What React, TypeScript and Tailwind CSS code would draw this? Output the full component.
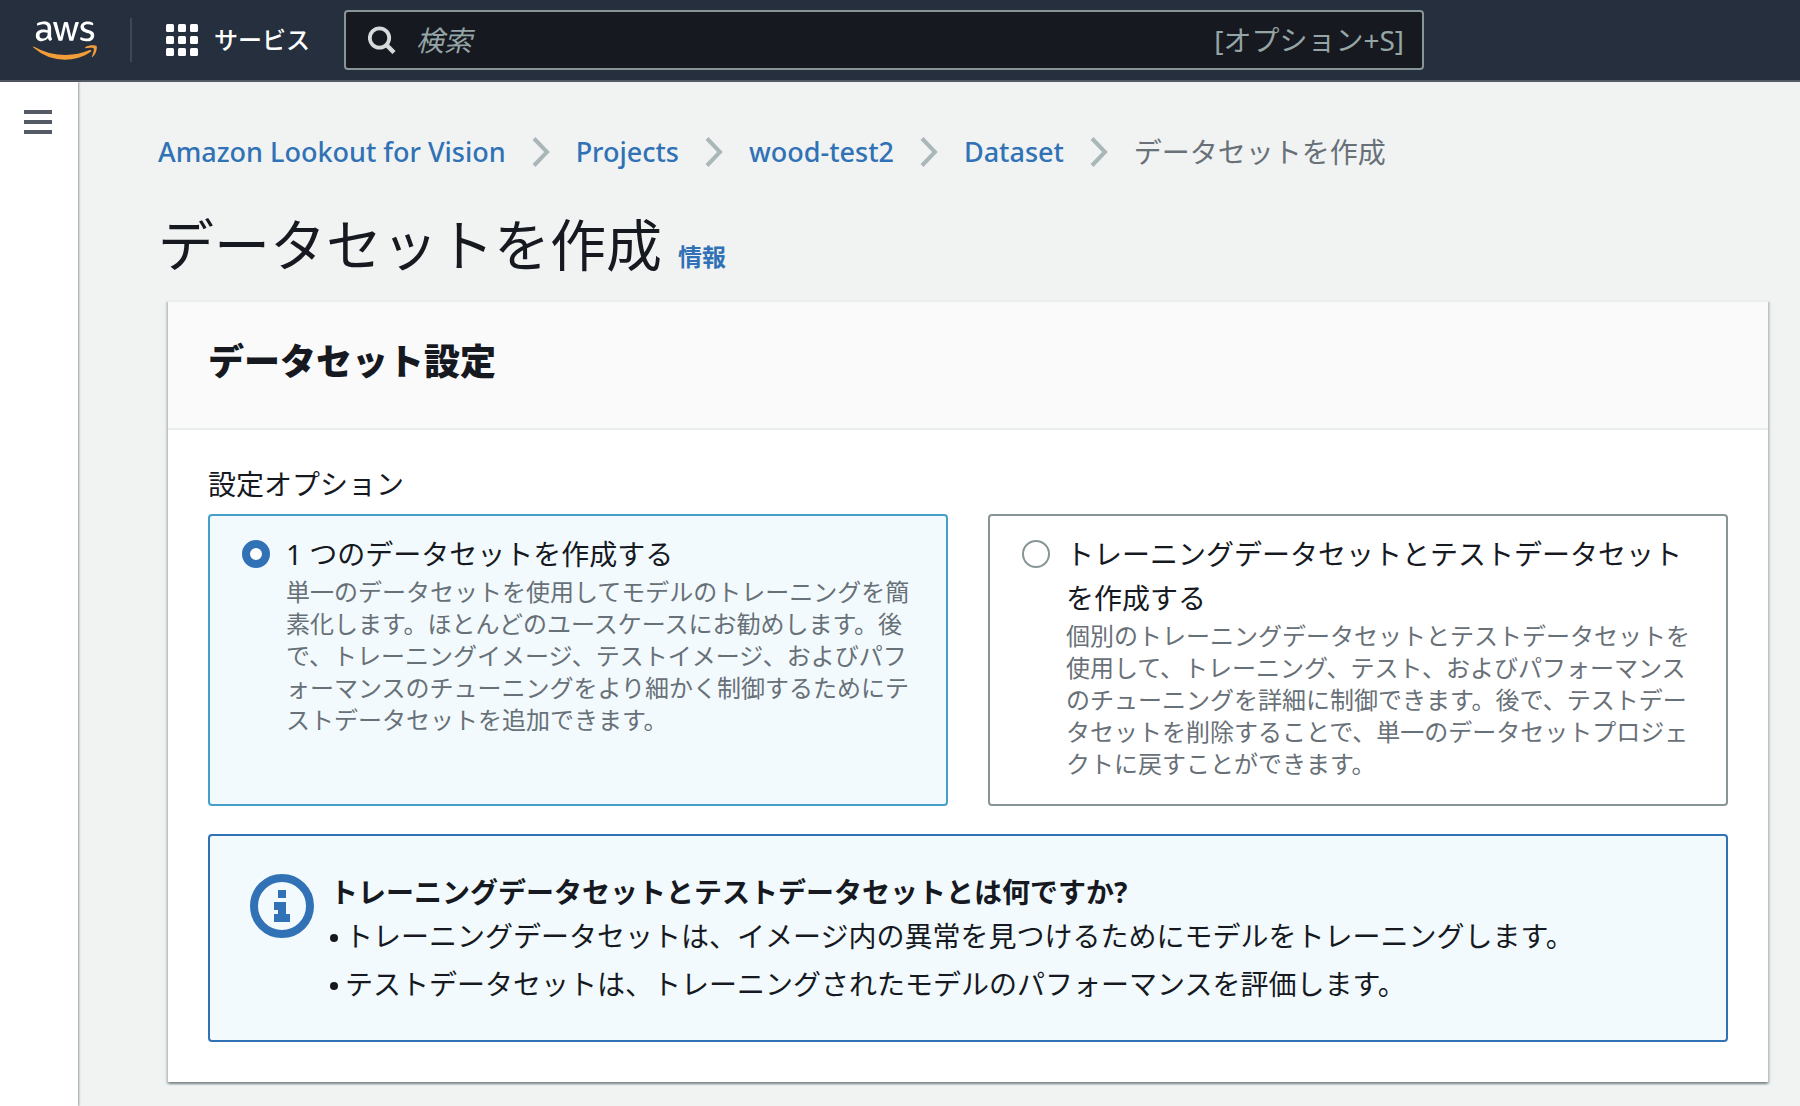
import { useState, type ReactNode } from "react";
import { FaAws } from "react-icons/fa";

const crumbs = ["Amazon Lookout for Vision", "Projects", "wood-test2", "Dataset"];

const options = [
  {
    id: "single",
    title: "1 つのデータセットを作成する",
    text: "単一のデータセットを使用してモデルのトレーニングを簡素化します。ほとんどのユースケースにお勧めします。後で、トレーニングイメージ、テストイメージ、およびパフォーマンスのチューニングをより細かく制御するためにテストデータセットを追加できます。",
  },
  {
    id: "split",
    title: "トレーニングデータセットとテストデータセットを作成する",
    text: "個別のトレーニングデータセットとテストデータセットを使用して、トレーニング、テスト、およびパフォーマンスのチューニングを詳細に制御できます。後で、テストデータセットを削除することで、単一のデータセットプロジェクトに戻すことができます。",
  },
];

const notes = [
  "トレーニングデータセットは、イメージ内の異常を見つけるためにモデルをトレーニングします。",
  "テストデータセットは、トレーニングされたモデルのパフォーマンスを評価します。",
];

function AwsLogo() {
  return (
    <a href="#" aria-label="AWS" className="block text-white">
      <svg width="0" height="0" className="absolute" aria-hidden="true">
        <defs>
          <linearGradient id="aws-fill" gradientUnits="userSpaceOnUse" x1="0" y1="0" x2="0" y2="512">
            <stop offset="0.595" stopColor="#ffffff" />
            <stop offset="0.595" stopColor="#f19e38" />
          </linearGradient>
        </defs>
      </svg>
      <FaAws className="h-[51px] w-16 fill-[url(#aws-fill)]" />
    </a>
  );
}

function GridIcon() {
  return (
    <svg width="32" height="32" viewBox="0 0 32 32" fill="currentColor" aria-hidden="true">
      {[0, 12, 24].map((y) => [0, 12, 24].map((x) => <rect key={`${x}-${y}`} x={x} y={y} width="8" height="8" rx="1.5" />))}
    </svg>
  );
}

function SearchIcon() {
  return (
    <svg width="28" height="28" viewBox="0 0 28 28" fill="none" stroke="#d5dbdb" aria-hidden="true" className="shrink-0">
      <circle cx="11.5" cy="12" r="9.7" strokeWidth="3.8" />
      <path d="M18.5 19l7.5 7.5" strokeWidth="4.4" />
    </svg>
  );
}

function Chevron() {
  return (
    <svg width="18" height="30" viewBox="0 0 18 30" fill="none" stroke="#aab7b8" strokeWidth="4" aria-hidden="true">
      <path d="M2 1.5L15 15L2 28.5" />
    </svg>
  );
}

function InfoIcon() {
  return (
    <svg width="64" height="64" viewBox="0 0 64 64" aria-hidden="true" className="shrink-0">
      <circle cx="32" cy="32" r="28" fill="none" stroke="#3072b5" strokeWidth="8" />
      <path fill="#3072b5" d="M28 16h8v8h-8zM24 28h12v12h4v8H24v-8h4v-4h-4z" />
    </svg>
  );
}

function Header() {
  return (
    <header className="flex items-center border-b-2 border-[#545b64] bg-[#262f3e] pr-8">
      <div className="flex h-20 items-center pl-[33px]">
        <AwsLogo />
        <div className="ml-[33px] h-11 w-0.5 bg-[#414750]" />
        <button type="button" className="ml-[34px] flex items-center gap-4 text-2xl text-white">
          <GridIcon />
          <span className="font-medium">サービス</span>
        </button>
      </div>
      <label className="ml-[34px] flex h-[60px] w-full max-w-[1080px] items-center rounded-sm border-2 border-[#879596] bg-[#16191f] pr-[18px] pl-[22px] text-[28px] text-[#95a5a6]">
        <SearchIcon />
        <input
          type="search"
          placeholder="検索"
          aria-label="検索"
          className="ml-5 min-w-0 flex-1 bg-transparent outline-none placeholder:text-[#95a5a6] placeholder:italic"
        />
        <span>[オプション+S]</span>
      </label>
    </header>
  );
}

function Card({ title, children }: { title: string; children: ReactNode }) {
  return (
    <section className="mt-[22px] ml-2.5 border-t-2 border-[#eaeded] bg-white shadow-[0_2px_2px_0_rgba(0,28,36,0.3),2px_2px_2px_0_rgba(0,28,36,0.15),-2px_2px_2px_0_rgba(0,28,36,0.15)]">
      <div className="border-b-2 border-[#eaeded] bg-[#fafafa] px-10 pt-8 pb-[38px]">
        <h2 className="text-4xl leading-14 font-black">{title}</h2>
      </div>
      <div className="px-10 pt-8 pb-10">{children}</div>
    </section>
  );
}

export default function App() {
  const [selected, setSelected] = useState("single");
  return (
    <div
      lang="ja"
      className="flex min-h-screen flex-col bg-[#f1f3f3] font-['Noto_Sans','Noto_Sans_CJK_JP',sans-serif] text-[#16191f]"
    >
      <Header />
      <div className="flex flex-1">
        <aside className="w-[78px] shrink-0 bg-white px-6 pt-7 shadow-[1px_0_2px_rgba(0,28,36,0.4)]">
          <button type="button" aria-label="メニュー" className="flex w-7 flex-col gap-1.5">
            <span className="h-1 w-full bg-[#545b64]" />
            <span className="h-1 w-full bg-[#545b64]" />
            <span className="h-1 w-full bg-[#545b64]" />
          </button>
        </aside>
        <main className="min-w-0 flex-1 pt-12 pr-8 pb-6 pl-20">
          <nav aria-label="パンくずリスト">
            <ol className="flex flex-wrap items-center text-[28px] leading-11">
              {crumbs.map((c) => (
                <li key={c} className="flex items-center">
                  <a href="#" className="text-[27px] font-medium text-[#3072b5]">
                    {c}
                  </a>
                  <span className="mx-[26px]">
                    <Chevron />
                  </span>
                </li>
              ))}
              <li className="text-[#687078]" aria-current="page">
                データセットを作成
              </li>
            </ol>
          </nav>
          <div className="mt-9 flex items-baseline gap-4">
            <h1 className="text-[56px] leading-[68px]">データセットを作成</h1>
            <a href="#" className="text-2xl font-bold text-[#3072b5]">
              情報
            </a>
          </div>
          <Card title="データセット設定">
            <fieldset>
              <legend className="text-[28px] leading-11">設定オプション</legend>
              <div className="mt-2 grid grid-cols-2 gap-10">
                {options.map((o) => (
                  <label
                    key={o.id}
                    htmlFor={o.id}
                    className="flex gap-4 rounded-sm border-2 border-[#879596] pt-4 pr-9 pb-6 pl-8 has-checked:border-[#469fc9] has-checked:bg-[#f2fafd]"
                  >
                    <input
                      id={o.id}
                      type="radio"
                      name="dataset-option"
                      checked={selected === o.id}
                      onChange={() => setSelected(o.id)}
                      className="mt-2 size-7 shrink-0 appearance-none rounded-full border-2 border-[#879596] bg-white checked:border-8 checked:border-[#3072b5]"
                    />
                    <span className="block [line-break:normal]">
                      <span className="block text-[28px] leading-11">{o.title}</span>
                      <span className="block text-2xl text-[#687078]">{o.text}</span>
                    </span>
                  </label>
                ))}
              </div>
            </fieldset>
            <div className="mt-7 flex gap-4 rounded-sm border-2 border-[#3072b5] bg-[#f2fafd] px-10 py-[34px] text-[28px] leading-11">
              <div className="pt-1">
                <InfoIcon />
              </div>
              <div>
                <h3 className="font-bold">トレーニングデータセットとテストデータセットとは何ですか?</h3>
                <ul className="flex flex-col gap-1">
                  {notes.map((n) => (
                    <li key={n} className="flex gap-[7px] before:mt-5 before:size-2 before:shrink-0 before:rounded-full before:bg-[#16191f]">
                      {n}
                    </li>
                  ))}
                </ul>
              </div>
            </div>
          </Card>
        </main>
      </div>
    </div>
  );
}
